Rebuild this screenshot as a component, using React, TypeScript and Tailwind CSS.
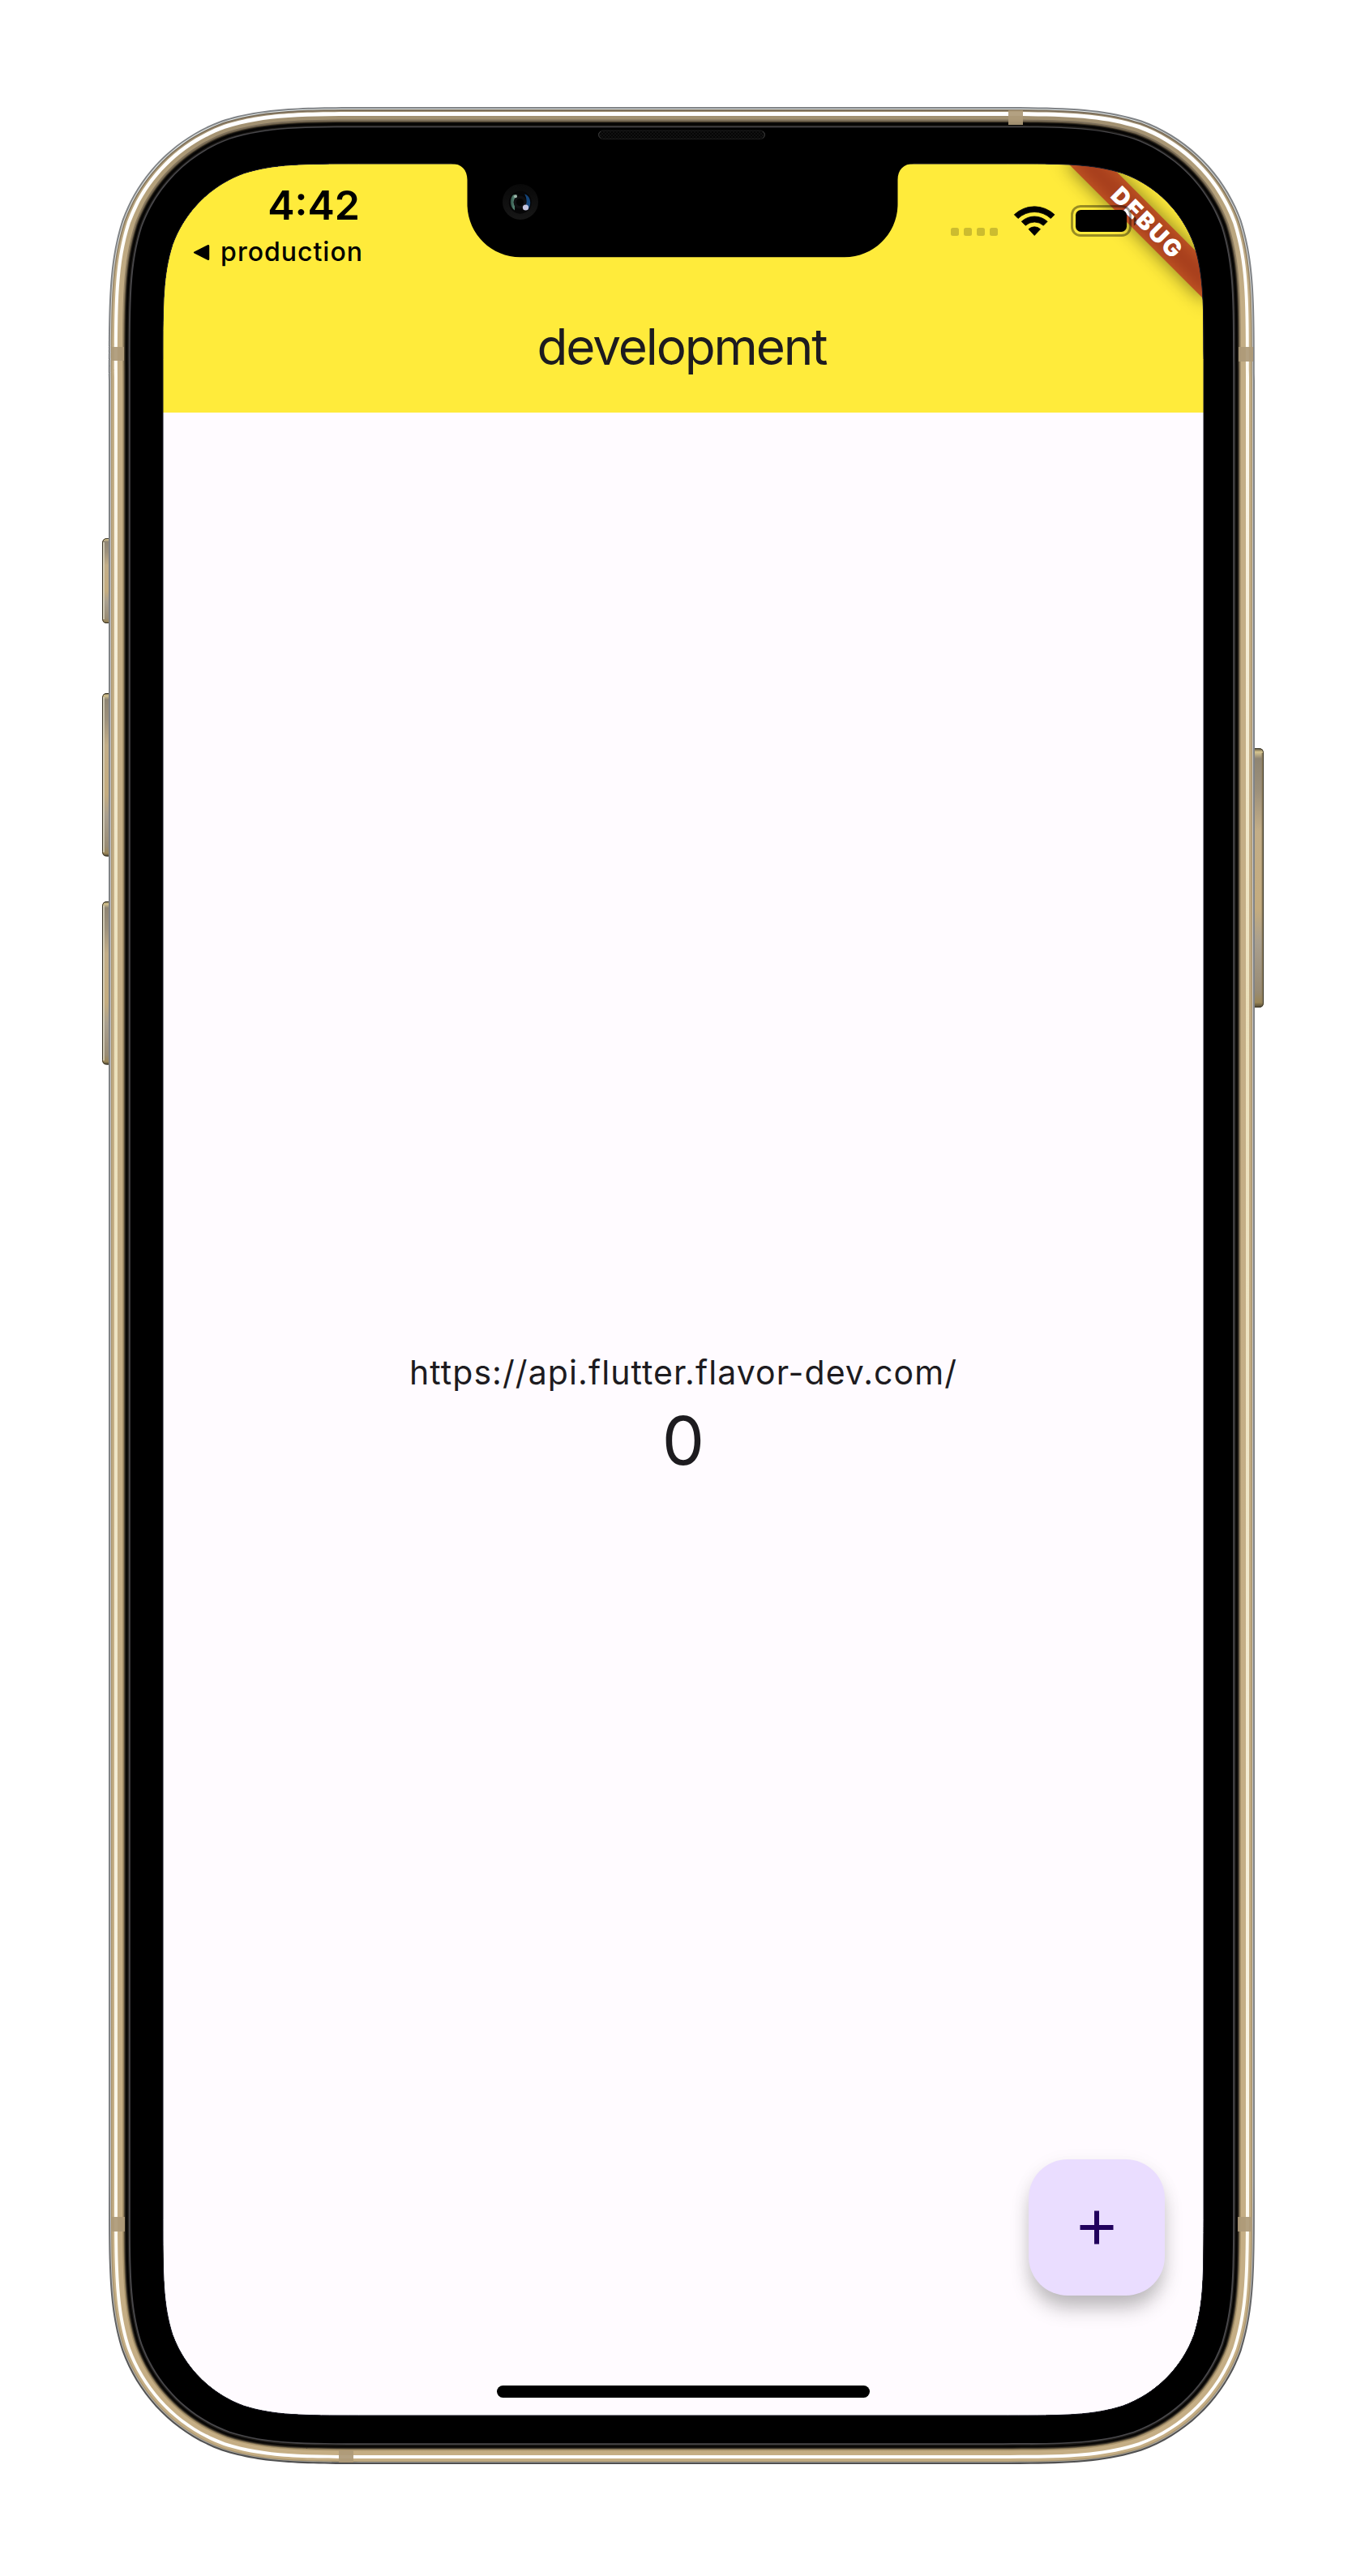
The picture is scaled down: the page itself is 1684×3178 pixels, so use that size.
import React from "react";

const OUTER = { left: 134, right: 1548, top: 132, bottom: 3040, radius: 221 };
const SCREEN = { left: 201, right: 1485, top: 202, bottom: 2980, radius: 158 };

type Box = { left: number; right: number; top: number; bottom: number; radius: number };

/** Rounded rectangle with continuous-curvature corners. */
function squircle({ left, right, top, bottom, radius: r }: Box): string {
  const a = 1.528665 * r;
  const b = 1.08849296 * r;
  const c = 0.86840694 * r;
  const d = 0.63149379 * r;
  const e = 0.07491139 * r;
  const f = 0.37282383 * r;
  const g = 0.16905956 * r;
  return [
    `M${left + a} ${top}H${right - a}`,
    `C${right - b} ${top} ${right - c} ${top} ${right - d} ${top + e}`,
    `C${right - f} ${top + g} ${right - g} ${top + f} ${right - e} ${top + d}`,
    `C${right} ${top + c} ${right} ${top + b} ${right} ${top + a}`,
    `V${bottom - a}`,
    `C${right} ${bottom - b} ${right} ${bottom - c} ${right - e} ${bottom - d}`,
    `C${right - g} ${bottom - f} ${right - f} ${bottom - g} ${right - d} ${bottom - e}`,
    `C${right - c} ${bottom} ${right - b} ${bottom} ${right - a} ${bottom}`,
    `H${left + a}`,
    `C${left + b} ${bottom} ${left + c} ${bottom} ${left + d} ${bottom - e}`,
    `C${left + f} ${bottom - g} ${left + g} ${bottom - f} ${left + e} ${bottom - d}`,
    `C${left} ${bottom - c} ${left} ${bottom - b} ${left} ${bottom - a}`,
    `V${top + a}`,
    `C${left} ${top + b} ${left} ${top + c} ${left + e} ${top + d}`,
    `C${left + g} ${top + f} ${left + f} ${top + g} ${left + d} ${top + e}`,
    `C${left + c} ${top} ${left + b} ${top} ${left + a} ${top}Z`,
  ].join("");
}

/** Concentric metal layers: [side inset, top inset, bottom inset, fill]. */
const LAYERS: [number, number, number, string][] = [
  [0, 0, 0, "url(#rim)"],
  [2, 2, 2, "url(#rimLight)"],
  [3, 3, 3, "url(#metalEdge)"],
  [4.5, 5, 4, "url(#metal)"],
  [7, 6, 7, "url(#shine)"],
  [11, 11, 11, "url(#metal)"],
  [17, 15.5, 16.5, "url(#metalEdge)"],
  [18.5, 17, 18, "#73654c"],
  [19.5, 18, 19, "#3d3528"],
  [20.5, 19, 20, "#15120e"],
  [21.5, 20, 21, "#050403"],
  [23.5, 22.5, 22.5, "#1b1916"],
  [24.8, 23.8, 24, "#48474a"],
  [26.8, 25.2, 25.8, "#000000"],
];

const HOLE = squircle(SCREEN);

function inset(side: number, top: number, bottom: number): Box {
  return {
    left: OUTER.left + side,
    right: OUTER.right - side,
    top: OUTER.top + top,
    bottom: OUTER.bottom - bottom,
    radius: OUTER.radius - side,
  };
}

const LEFT_BUTTONS = [
  { y: 664, h: 105 },
  { y: 855, h: 201.5 },
  { y: 1112, h: 201.5 },
];

function DeviceFrame() {
  return (
    <svg aria-hidden="true" viewBox="0 0 1684 3178" className="pointer-events-none absolute inset-0 z-20 h-full w-full">
      <defs>
        <linearGradient id="rim" x1="0" y1="0" x2="0" y2="1">
          <stop offset="0" stopColor="#808386" />
          <stop offset="0.88" stopColor="#808386" />
          <stop offset="0.96" stopColor="#555555" />
          <stop offset="1" stopColor="#505050" />
        </linearGradient>
        <linearGradient id="rimLight" x1="0" y1="0" x2="0" y2="1">
          <stop offset="0" stopColor="#e4ecee" />
          <stop offset="0.12" stopColor="#c9c9ca" />
          <stop offset="0.88" stopColor="#c9c9ca" />
          <stop offset="1" stopColor="#a5a29c" />
        </linearGradient>
        <linearGradient id="metal" x1="0" y1="0" x2="0" y2="1">
          <stop offset="0" stopColor="#a08f70" />
          <stop offset="0.03" stopColor="#b5a17b" />
          <stop offset="0.08" stopColor="#c4ae86" />
          <stop offset="1" stopColor="#c5ae85" />
        </linearGradient>
        <linearGradient id="metalEdge" x1="0" y1="0" x2="0" y2="1">
          <stop offset="0" stopColor="#7b6e5b" />
          <stop offset="0.06" stopColor="#8f7f64" />
          <stop offset="0.12" stopColor="#ad9972" />
          <stop offset="1" stopColor="#a8936b" />
        </linearGradient>
        <linearGradient id="shine" x1="0" y1="0" x2="0" y2="1">
          <stop offset="0" stopColor="#ffffff" />
          <stop offset="0.09" stopColor="#fffdf8" />
          <stop offset="0.2" stopColor="#f6efdb" />
          <stop offset="0.38" stopColor="#ebe0bb" />
          <stop offset="0.6" stopColor="#efe6c8" />
          <stop offset="0.86" stopColor="#faf6e9" />
          <stop offset="0.95" stopColor="#fffefa" />
          <stop offset="1" stopColor="#ffffff" />
        </linearGradient>
        <linearGradient id="button" x1="0" y1="0" x2="0" y2="1">
          <stop offset="0" stopColor="#4b4432" />
          <stop offset="0.015" stopColor="#d8c690" />
          <stop offset="0.04" stopColor="#8f8573" />
          <stop offset="0.16" stopColor="#9c907b" />
          <stop offset="0.32" stopColor="#c3ae88" />
          <stop offset="0.62" stopColor="#c4ac7f" />
          <stop offset="0.75" stopColor="#a99f8e" />
          <stop offset="0.94" stopColor="#988b74" />
          <stop offset="0.98" stopColor="#9a8658" />
          <stop offset="1" stopColor="#4b4432" />
        </linearGradient>
        <linearGradient id="lensGreen" x1="0" y1="0" x2="1" y2="0">
          <stop offset="0" stopColor="#2b4d43" />
          <stop offset="0.5" stopColor="#568473" />
          <stop offset="1" stopColor="#15261f" />
        </linearGradient>
        <linearGradient id="lensRing" x1="0" y1="0" x2="0" y2="1">
          <stop offset="0" stopColor="#080808" />
          <stop offset="1" stopColor="#171717" />
        </linearGradient>
        <pattern id="mesh" width="4" height="4" patternUnits="userSpaceOnUse">
          <rect width="4" height="4" fill="#111111" />
          <rect width="2" height="2" fill="#060606" />
          <rect x="2" y="2" width="2" height="2" fill="#060606" />
        </pattern>
      </defs>

      {LEFT_BUTTONS.map(({ y, h }) => (
        <g key={y}>
          <path d={`M136 ${y}H132Q126 ${y} 126 ${y + 6}V${y + h - 6}Q126 ${y + h} 132 ${y + h}H136Z`} fill="url(#button)" />
          <path d={`M136 ${y + 0.5}H132Q126.5 ${y + 0.5} 126.5 ${y + 6}V${y + h - 6}Q126.5 ${y + h - 0.5} 132 ${y + h - 0.5}H136`} fill="none" stroke="#3b3628" strokeWidth="1" />
          <path d={`M128 ${y + 5}V${y + h - 5}`} stroke="#dbd6c2" strokeWidth="1.6" />
        </g>
      ))}
      <path d="M1546 923H1553Q1559 923 1559 929V1237Q1559 1243 1553 1243H1546Z" fill="url(#button)" />
      <path d="M1546 923.5H1553Q1558.5 923.5 1558.5 929V1237Q1558.5 1242.5 1553 1242.5H1546" fill="none" stroke="#3b3628" strokeWidth="1" />
      <path d="M1557.3 929V1237" stroke="#8a7b5b" strokeWidth="1.4" />

      {LAYERS.map(([side, top, bottom, fill]) => (
        <path key={side} d={squircle(inset(side, top, bottom)) + HOLE} fill={fill} fillRule="evenodd" />
      ))}

      <g fill="#ad9a78" fillOpacity="0.93">
        <rect x="138" y="428" width="15" height="17" />
        <rect x="1528" y="428" width="18" height="18" />
        <rect x="1244" y="136" width="18" height="18" />
        <rect x="138" y="2735" width="16" height="18" />
        <rect x="1527" y="2735" width="18" height="18" />
        <rect x="418" y="3023" width="18" height="15" />
      </g>

      <path d={HOLE} fill="none" stroke="#181824" strokeWidth="1" />
      <path
        d="M557 200V202C569 202 576.5 209 576.5 222V252C576.5 288 606 317.3 642 317.3H1042C1078 317.3 1107.5 288 1107.5 252V222C1107.5 209 1115 202 1127 202V200Z"
        fill="#000000"
      />
      <rect x="738.5" y="161" width="205" height="10.5" rx="5.2" fill="url(#mesh)" stroke="#1c1c1c" strokeWidth="1" />
      <path d="M741 162Q738.5 164 738.5 166.2T741 170.5M941 162Q943.5 164 943.5 166.2T941 170.5" fill="none" stroke="#3a3a3a" strokeWidth="1" />

      <circle cx="642" cy="249" r="22" fill="url(#lensRing)" />
      <circle cx="641.8" cy="249.7" r="14" fill="#060607" />
      <path d="M633 240.5C628.5 245 628.5 255 635 259.5C635.5 252 634 247 638.5 240Z" fill="url(#lensGreen)" />
      <path d="M647 239.5C655.5 241.5 656 254 651 259C646 258 646.5 255 649 251C650 247 649.5 243 647 239.5Z" fill="#14457a" />
      <circle cx="641.5" cy="249.5" r="8" fill="#0f0f11" />
      <circle cx="641.5" cy="249.5" r="4.5" fill="#030303" />
      <circle cx="636" cy="242.3" r="2" fill="#9fb5aa" />
      <circle cx="648.5" cy="256" r="3.6" fill="#c6c6e0" />
    </svg>
  );
}

function DebugBanner() {
  return (
    <div aria-label="Debug banner" className="absolute right-0 top-0 h-0 w-0 rotate-45">
      <div className="absolute -left-[120px] top-[83px] h-[35px] w-[240px] bg-black/50 blur-[12px]" />
      <div className="absolute -left-[120px] top-[83px] flex h-[35px] w-[240px] items-center justify-center bg-[#b71c1c]/65">
        <span className="ml-[5px] text-[29px] font-black leading-none tracking-[2.2px] text-white">DEBUG</span>
      </div>
    </div>
  );
}

function StatusBar() {
  return (
    <div className="relative z-10 flex h-[141px] justify-between pl-[36px] pr-[81px] text-black">
      <div className="flex w-[210px] flex-col items-end pt-[26px]">
        <span className="mr-[3px] text-[50px] font-semibold leading-[50px]">4:42</span>
        <div className="mt-[17px] flex items-center gap-[13px]">
          <svg width="21" height="21" viewBox="0 0 21 21" aria-hidden="true">
            <path d="M1.6 10.5 18.5 1.8Q19.5 1.5 19.5 2.5V18.5Q19.5 19.5 18.5 19.2Z" stroke="#000" strokeWidth="1.5" strokeLinejoin="round" />
          </svg>
          <span className="-mr-[1px] text-[32px] font-medium leading-[32px] tracking-[1px]">production</span>
        </div>
      </div>
      <div className="mt-[50px] flex h-[41px]">
        <div className="mt-[29px] flex gap-[6px]">
          {[0, 1, 2, 3].map((i) => (
            <span key={i} className="size-[10px] rounded-[2.5px] bg-black/20" />
          ))}
        </div>
        <svg className="ml-[19px]" width="52" height="41" viewBox="1250 252 52 41" aria-hidden="true">
          <g stroke="#000" strokeWidth="0.8" strokeLinejoin="round">
            <path d="M1251.3 264.8A36 36 0 0 1 1301 264.8L1296.3 269.5A29.5 29.5 0 0 0 1256 269.5Z" />
            <path d="M1260.2 273.3A23.5 23.5 0 0 1 1292.2 273.3L1287.3 278.2A16.5 16.5 0 0 0 1265.2 278.2Z" />
            <path d="M1269 282.7A10.5 10.5 0 0 1 1283.5 282.7L1276.2 290.5Z" />
          </g>
        </svg>
        <svg className="ml-[18px]" width="84" height="41" viewBox="1320 252 84 41" aria-hidden="true">
          <rect x="1322.5" y="254.5" width="72" height="36" rx="10.5" fill="none" stroke="#000" strokeOpacity="0.4" strokeWidth="2.8" />
          <rect x="1327" y="259" width="63" height="27" rx="6.5" />
          <path d="M1398.8 266.5C1403.5 268.5 1403.5 276.5 1398.8 278.5Z" fillOpacity="0.5" />
        </svg>
      </div>
    </div>
  );
}

export default function App() {
  return (
    <div className="relative h-[3178px] w-[1684px] overflow-hidden bg-white pl-[201px] pt-[202px] font-['Inter',sans-serif]">
      <div className="relative flex h-[2778px] w-[1284px] flex-col overflow-hidden rounded-[150px] bg-[#fffbff] text-[#1d1b1f]">
        <header className="flex h-[307px] flex-col bg-[#ffeb3b]">
          <StatusBar />
          <div className="flex flex-1 items-center justify-center pr-[4px] pt-[3px]">
            <h1 className="text-[62px] font-normal leading-none tracking-[-2.1px]">development</h1>
          </div>
        </header>

        <main className="flex flex-1 flex-col items-center justify-center pt-[4px]">
          <p className="text-[41px] leading-[60px] tracking-[1.08px]">https://api.flutter.flavor-dev.com/</p>
          <p className="text-[83px] leading-[108px]">0</p>
        </main>

        <button
          aria-label="Increment"
          className="absolute bottom-[148px] right-[48px] flex size-[168px] items-center justify-center rounded-[48px] bg-[#eaddff] shadow-[0_18px_24px_-3px_rgba(0,0,0,0.25),0_4px_24px_0_rgba(0,0,0,0.05)]"
        >
          <svg width="42" height="42" viewBox="0 0 42 42" aria-hidden="true">
            <path d="M18 0.5H24V18H41.5V24H24V41.5H18V24H0.5V18H18Z" fill="#21005d" />
          </svg>
        </button>

        <div className="absolute bottom-[22px] left-1/2 h-[15px] w-[460px] -translate-x-1/2 rounded-full bg-black" />
        <DebugBanner />
      </div>
      <DeviceFrame />
    </div>
  );
}
